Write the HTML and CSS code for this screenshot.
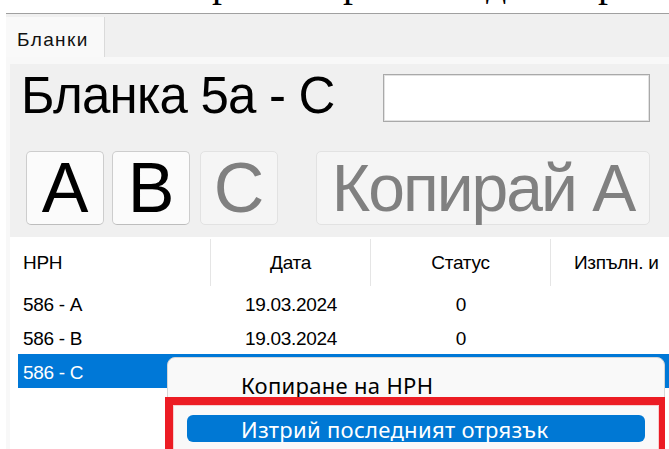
FILE: index.html
```html
<!DOCTYPE html>
<html lang="bg">
<head>
<meta charset="utf-8">
<title>Бланки</title>
<link rel="stylesheet" href="styles.css">
</head>
<body>
  <!-- bottom edge of the document text above the form -->
  <div class="doc-strip">
    <div class="doc-line"><span class="g g1">р</span><span class="g g2">р</span><span class="g g3">д</span><span class="g g4">р</span></div>
  </div>

  <div class="window">
    <div class="tabstrip">
      <div class="tab">Бланки</div>
    </div>
    <div class="page">
      <div class="panel">
        <div class="title-row">
          <h1 class="title">Бланка 5а - С</h1>
          <input class="field" type="text" aria-label="Търсене">
        </div>

        <div class="btn-row">
          <button class="btn btn-letter btn-a">А</button>
          <button class="btn btn-letter btn-b">В</button>
          <button class="btn btn-letter btn-c" disabled>С</button>
          <button class="btn btn-copy" disabled>Копирай А</button>
        </div>

        <div class="grid">
          <div class="grid-row grid-head">
            <div class="cell c1">НРН</div>
            <div class="cell c2">Дата</div>
            <div class="cell c3">Статус</div>
            <div class="cell c4">Изпълн. и</div>
          </div>
          <div class="grid-row">
            <div class="cell c1">586 - А</div>
            <div class="cell c2">19.03.2024</div>
            <div class="cell c3">0</div>
            <div class="cell c4"></div>
          </div>
          <div class="grid-row">
            <div class="cell c1">586 - В</div>
            <div class="cell c2">19.03.2024</div>
            <div class="cell c3">0</div>
            <div class="cell c4"></div>
          </div>
          <div class="grid-row selected">
            <div class="cell c1">586 - С</div>
            <div class="cell c2">19.03.2024</div>
            <div class="cell c3">0</div>
            <div class="cell c4"></div>
          </div>
        </div>
      </div>
    </div>
  </div>

  <!-- right-click menu on the selected row -->
  <div class="menu">
    <div class="menu-item">Копиране на НРН</div>
    <div class="menu-item active">Изтрий последният отрязък</div>
  </div>
  <div class="mark"></div>
</body>
</html>
```

FILE: styles.css
```css
* { box-sizing: border-box; }

html, body {
  margin: 0;
  padding: 0;
  width: 669px;
  height: 449px;
  overflow: hidden;
  background: #ffffff;
  font-family: "Liberation Sans", Arial, sans-serif;
  color: #000;
}

/* document text cut off by the top edge */
.doc-strip {
  height: 13px;
  overflow: hidden;
}
.doc-line {
  display: flex;
  margin-top: -37px;
  font-family: "Liberation Serif", "Times New Roman", serif;
  font-size: 40px;
  line-height: 40px;
  color: #000;
}
.g { display: block; width: 20px; }
.g1 { margin-left: 212px; }
.g2 { margin-left: 111px; }
.g3 { margin-left: 123px; }
.g4 { margin-left: 92px; }

/* form window */
.window {
  margin-left: 6px;
  border-top: 1px solid #a0a0a0;
}

.tabstrip {
  height: 43px;
  background: #f0f0f0;
  padding-top: 3px;
}
.tab {
  width: 99px;
  height: 40px;
  background: #f9f9f9;
  border-right: 1px solid #dadada;
  padding: 12px 0 0 11px;
  font-size: 19px;
  line-height: 22px;
  letter-spacing: 1.4px;
  color: #111;
}

.page {
  background: #f8f8f8;
  padding: 7px 0 0 4px;
}

.panel {
  background: #f0f0f0;
  height: 400px;
}

.title-row {
  display: flex;
  justify-content: space-between;
  align-items: flex-start;
  padding: 10px 19px 0 11px;
}
.title {
  margin: 0;
  font-weight: normal;
  font-size: 51px;
  line-height: 44px;
  letter-spacing: -0.8px;
}
.field {
  width: 267px;
  height: 48px;
  margin: 0;
  border: 1px solid #a9a9a9;
  box-shadow: inset 0 0 0 1px #e2e2e2;
  background: #fff;
  border-radius: 0;
  outline: none;
}

.btn-row {
  display: flex;
  padding: 29px 0 0 16px;
}
.btn {
  height: 74px;
  margin: 0;
  padding: 0;
  display: flex;
  align-items: center;
  justify-content: center;
  background: #fbfbfb;
  border: 1px solid #cdcdcd;
  border-bottom-color: #bdbdbd;
  border-radius: 5px;
  font-family: "Liberation Sans", Arial, sans-serif;
  font-size: 70px;
  line-height: 1;
  color: #000;
}
.btn:disabled {
  background: #f5f5f5;
  border-color: #e2e2e2;
  color: #808080;
}
.btn-letter { width: 78px; }
.btn-b { margin-left: 8px; }
.btn-c { margin-left: 10px; }
.btn-copy {
  width: 334px;
  margin-left: 38px;
  font-size: 66px;
  letter-spacing: -2px;
}

/* data grid */
.grid {
  margin-top: 12px;
  background: #fff;
  padding-left: 8px;
  height: 220px;
  font-size: 19px;
  letter-spacing: -0.3px;
}
.grid-row {
  display: grid;
  grid-template-columns: 193px 160px 180px 1fr;
  height: 34px;
  padding-top: 4px;
  align-items: center;
}
.grid-head {
  height: 49px;
  padding-top: 2px;
  align-items: stretch;
}
.grid-head .cell {
  display: flex;
  align-items: center;
}
.grid-head .c1, .grid-head .c2, .grid-head .c3 {
  border-right: 1px solid #e5e5e5;
}
.cell {
  white-space: nowrap;
  overflow: hidden;
}
.c1 { padding-left: 5px; }
.c2, .c3 { text-align: center; }
.grid-head .c2, .grid-head .c3 { justify-content: center; }
.c4 { padding-left: 23px; }
.grid-row.selected {
  background: #0078d7;
  color: #fff;
}

/* context menu */
.menu {
  position: absolute;
  left: 167px;
  top: 357px;
  width: 498px;
  height: 130px;
  background: #f9f9f9;
  border: 1px solid #d6d6d6;
  border-radius: 8px;
  padding-top: 13px;
  font-family: "Noto Sans", "Open Sans", sans-serif;
  font-size: 22px;
  letter-spacing: 0.3px;
}
.menu-item {
  height: 27px;
  margin: 0 19px;
  padding-left: 54px;
  border-radius: 6px;
  display: flex;
  align-items: center;
  color: #000;
  white-space: nowrap;
}
.menu-item + .menu-item { margin-top: 17px; }
.menu-item.active {
  background: #0078d4;
  color: #fff;
}

/* red highlight frame */
.mark {
  position: absolute;
  left: 165px;
  top: 397px;
  width: 500px;
  height: 90px;
  border: 8px solid #ec1c24;
  border-right-width: 6px;
  box-shadow: inset 0 0 0 1px #f6cfd0;
}
```
